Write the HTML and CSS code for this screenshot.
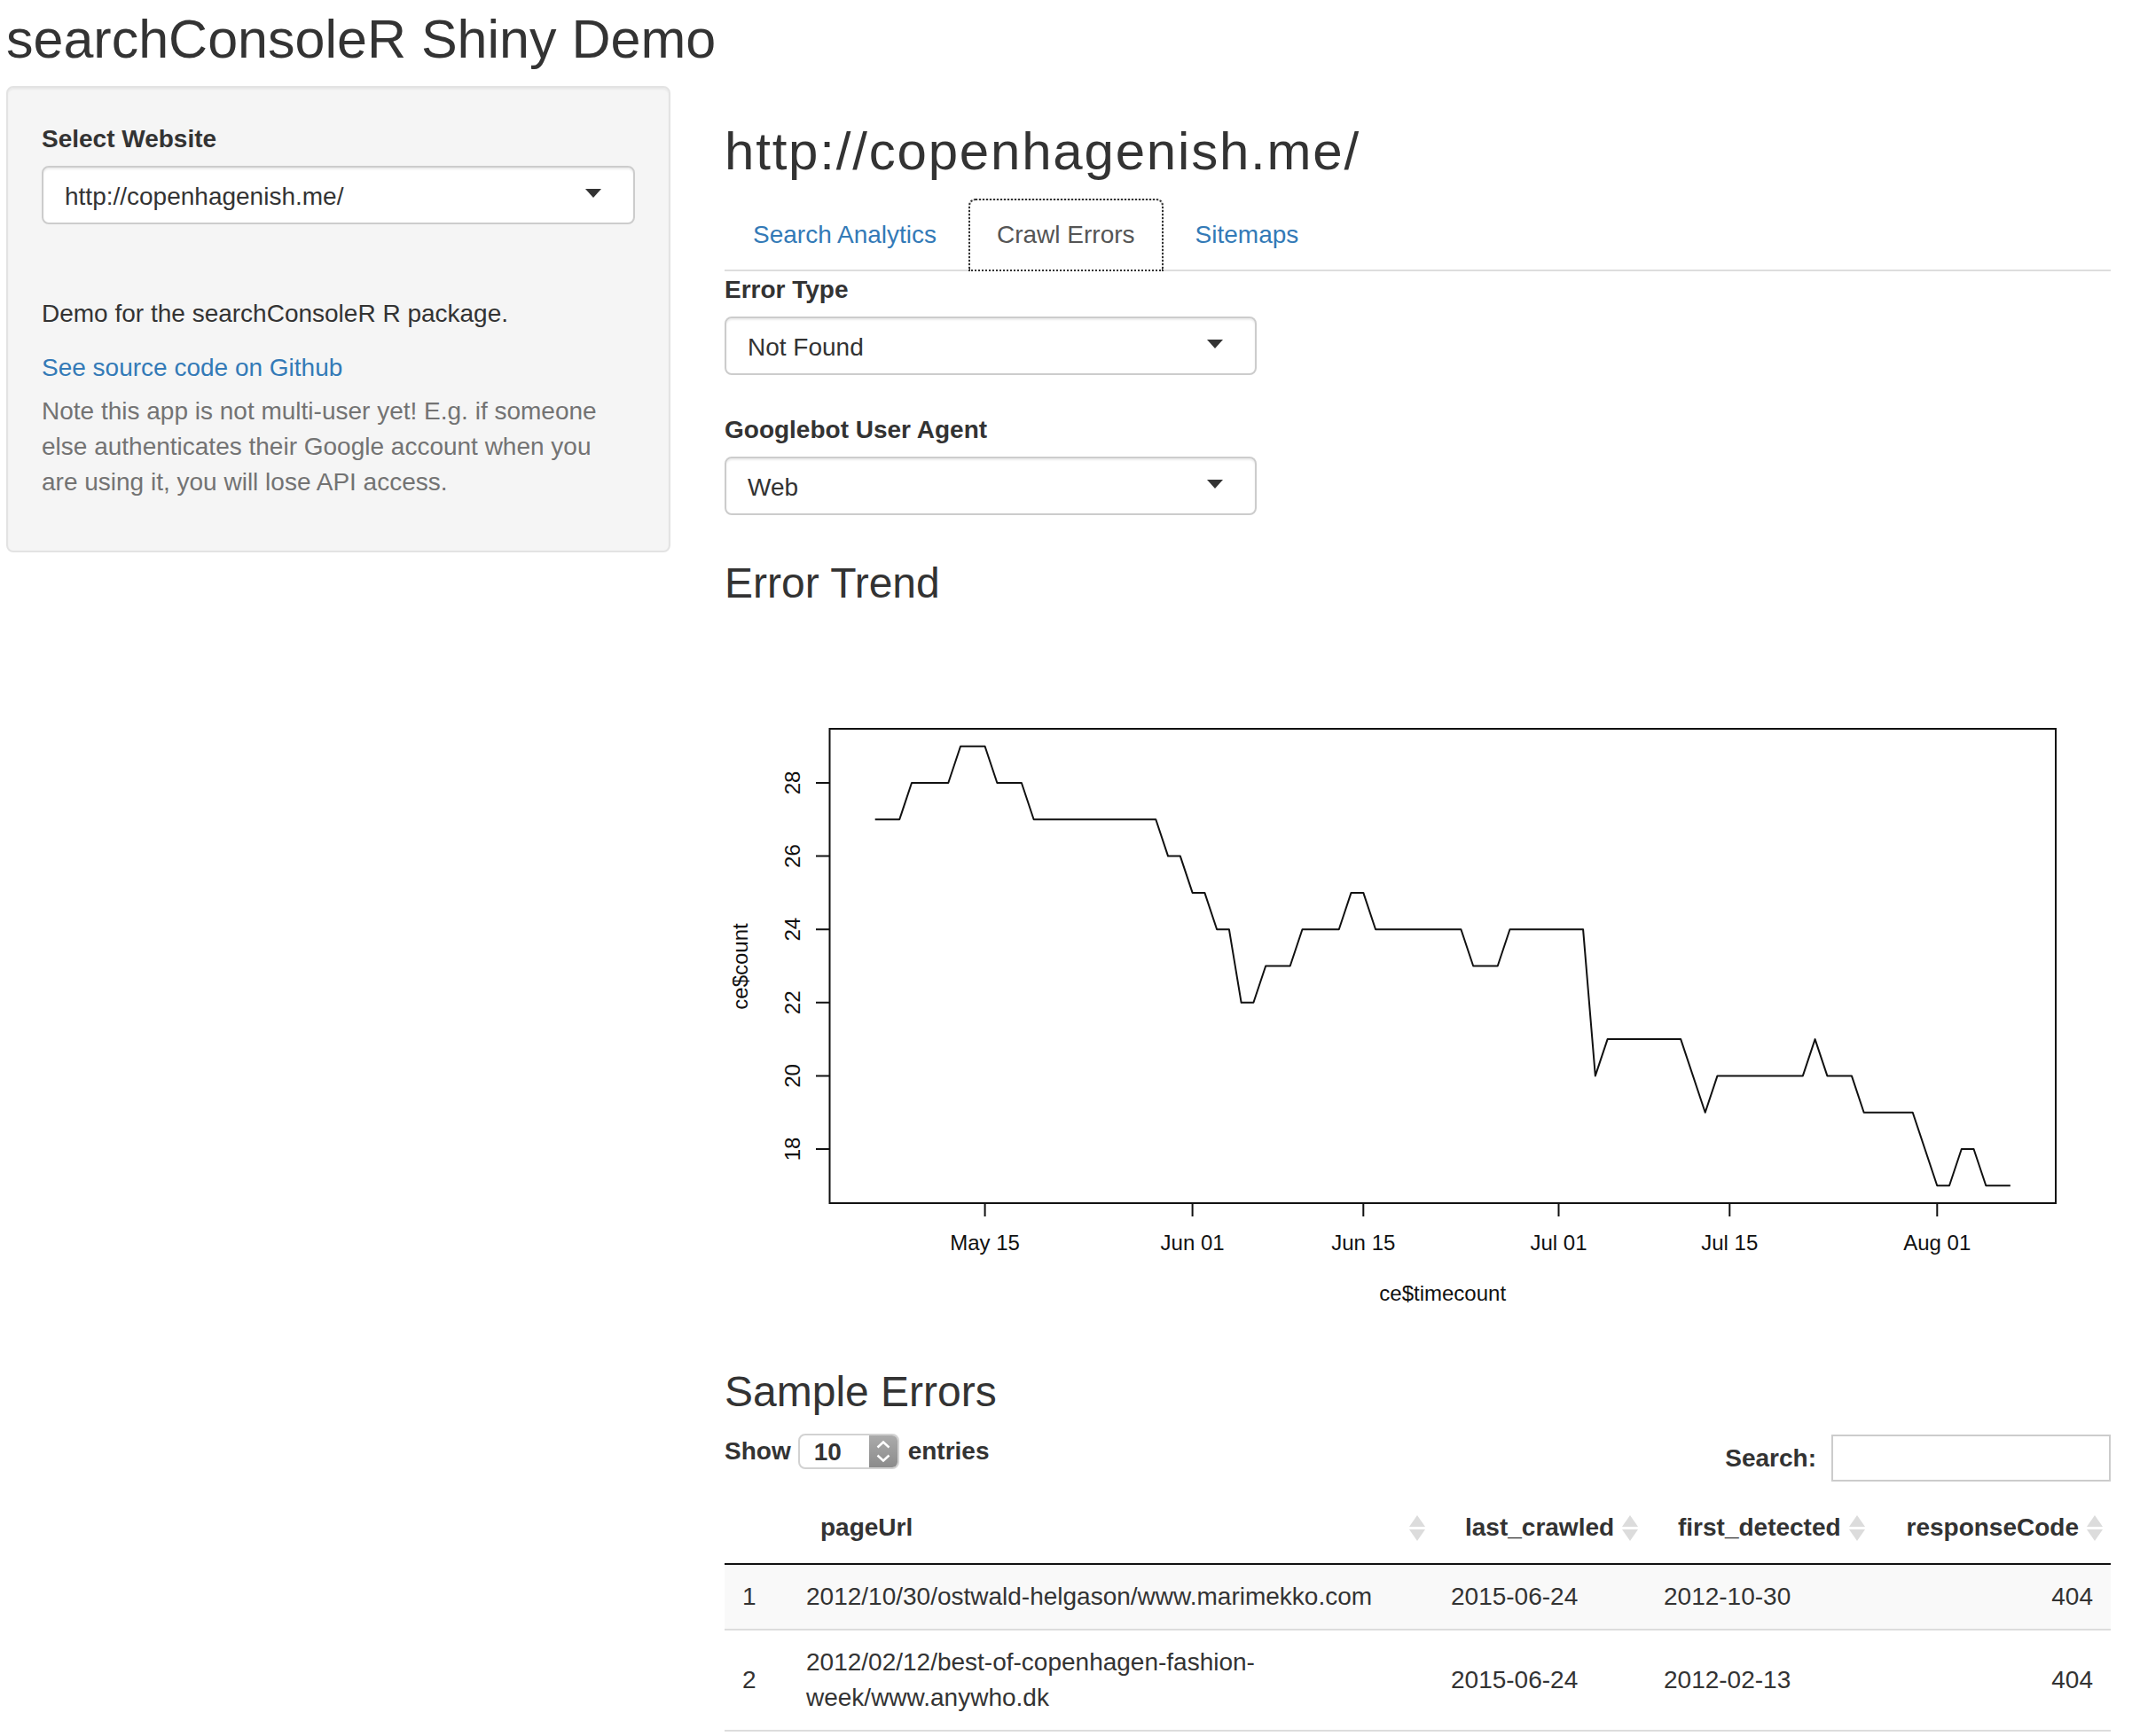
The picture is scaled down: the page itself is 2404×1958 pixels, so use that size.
FILE: index.html
```html
<!DOCTYPE html>
<html lang="en">
<head>
<meta charset="utf-8">
<title>searchConsoleR Shiny Demo</title>
<link rel="stylesheet" href="styles.css">
</head>
<body>
<div class="page">
  <h2 class="app-title">searchConsoleR Shiny Demo</h2>
  <div class="layout">
    <aside class="well">
      <label class="field-label">Select Website</label>
      <div class="select"><span>http://copenhagenish.me/</span><span class="caret"></span></div>
      <p class="demo">Demo for the searchConsoleR R package.</p>
      <p class="src"><a href="#">See source code on Github</a></p>
      <p class="note">Note this app is not multi-user yet! E.g. if someone else authenticates their Google account when you are using it, you will lose API access.</p>
    </aside>

    <main class="main">
      <h2 class="site-title">http://copenhagenish.me/</h2>
      <ul class="tabs">
        <li><a href="#">Search Analytics</a></li>
        <li class="active"><a href="#">Crawl Errors</a></li>
        <li><a href="#">Sitemaps</a></li>
      </ul>

      <div class="tab-pane">
        <div class="fields">
          <div class="group">
            <label class="field-label">Error Type</label>
            <div class="select narrow"><span>Not Found</span><span class="caret"></span></div>
          </div>
          <div class="group">
            <label class="field-label">Googlebot User Agent</label>
            <div class="select narrow"><span>Web</span><span class="caret"></span></div>
          </div>
        </div>

        <h3 class="section-title">Error Trend</h3>
        <svg class="plot" viewBox="817 704 1563 799" width="1563" height="799" xmlns="http://www.w3.org/2000/svg">
          <g fill="none" stroke="#111" stroke-width="2">
            <rect x="935.5" y="822" width="1382.5" height="535"/>
            <path d="M920 1296H935.5M920 1213.4H935.5M920 1130.8H935.5M920 1048.2H935.5M920 965.6H935.5M920 883H935.5"/>
            <path d="M1110.6 1357V1372M1344.6 1357V1372M1537.3 1357V1372M1757.5 1357V1372M1950.3 1357V1372M2184.3 1357V1372"/>
            <polyline vector-effect="non-scaling-stroke" stroke-linejoin="round" transform="translate(986.7 883) scale(13.765 -41.3) translate(0 -28)" points="0,27 2,27 3,28 6,28 7,29 9,29 10,28 12,28 13,27 23,27 24,26 25,26 26,25 27,25 28,24 29,24 30,22 31,22 32,23 34,23 35,24 38,24 39,25 40,25 41,24 48,24 49,23 51,23 52,24 58,24 59,20 60,21 66,21 68,19 69,20 76,20 77,21 78,20 80,20 81,19 85,19 87,17 88,17 89,18 90,18 91,17 93,17"/>
          </g>
          <g font-size="24" fill="#111" text-anchor="middle">
            <text transform="translate(902 1296) rotate(-90)">18</text>
            <text transform="translate(902 1213.4) rotate(-90)">20</text>
            <text transform="translate(902 1130.8) rotate(-90)">22</text>
            <text transform="translate(902 1048.2) rotate(-90)">24</text>
            <text transform="translate(902 965.6) rotate(-90)">26</text>
            <text transform="translate(902 883) rotate(-90)">28</text>
            <text x="1110.6" y="1410">May 15</text>
            <text x="1344.6" y="1410">Jun 01</text>
            <text x="1537.3" y="1410">Jun 15</text>
            <text x="1757.5" y="1410">Jul 01</text>
            <text x="1950.3" y="1410">Jul 15</text>
            <text x="2184.3" y="1410">Aug 01</text>
            <text transform="translate(843 1090) rotate(-90)">ce$count</text>
            <text x="1626.7" y="1467">ce$timecount</text>
          </g>
        </svg>

        <h3 class="section-title">Sample Errors</h3>
        <div class="dt-top">
          <label class="dt-length">Show
            <span class="len-select">
              <span class="len-val">10</span>
              <span class="len-spin">
                <svg width="18" height="26" viewBox="0 0 18 26" xmlns="http://www.w3.org/2000/svg"><path d="M2.5 8.5L9 2.5L15.5 8.5M2.5 17.5L9 23.5L15.5 17.5" fill="none" stroke="#fff" stroke-width="2.4"/></svg>
              </span>
            </span>
            entries</label>
          <label class="dt-filter">Search:<input type="search" class="search-input"></label>
        </div>

        <table class="dt">
          <colgroup>
            <col class="c-idx"><col class="c-url"><col class="c-crawl"><col class="c-first"><col class="c-code">
          </colgroup>
          <thead>
            <tr>
              <th></th>
              <th class="sortable">pageUrl</th>
              <th class="sortable">last_crawled</th>
              <th class="sortable">first_detected</th>
              <th class="sortable num">responseCode</th>
            </tr>
          </thead>
          <tbody>
            <tr class="odd">
              <td>1</td>
              <td>2012/10/30/ostwald-helgason/www.marimekko.com</td>
              <td>2015-06-24</td>
              <td>2012-10-30</td>
              <td class="num">404</td>
            </tr>
            <tr>
              <td>2</td>
              <td>2012/02/12/best-of-copenhagen-fashion-week/www.anywho.dk</td>
              <td>2015-06-24</td>
              <td>2012-02-13</td>
              <td class="num">404</td>
            </tr>
          </tbody>
        </table>
      </div>
    </main>
  </div>
</div>
</body>
</html>
```

FILE: styles.css
```css
* { box-sizing: border-box; }

html, body {
  margin: 0;
  padding: 0;
  background: #fff;
}

body {
  width: 2404px;
  font-family: "Liberation Sans", Arial, Helvetica, sans-serif;
  font-size: 28px;
  line-height: 40px;
  color: #333;
  overflow: hidden;
}

.page {
  padding: 0 24px 0 7px;
}

.app-title {
  font-size: 61px;
  line-height: 66px;
  font-weight: 400;
  margin: 11px 0 20px;
}

.layout {
  display: flex;
  align-items: flex-start;
  gap: 61px;
}

/* sidebar */
.well {
  flex: none;
  width: 749px;
  background: #f5f5f5;
  border: 2px solid #e3e3e3;
  border-radius: 8px;
  box-shadow: inset 0 2px 2px rgba(0, 0, 0, 0.05);
  padding: 38px;
}

.field-label {
  display: block;
  font-weight: 700;
  margin: 0 0 10px;
}

.select {
  display: flex;
  align-items: center;
  justify-content: space-between;
  height: 66px;
  padding: 4px 36px 0 24px;
  background: #fff;
  border: 2px solid #ccc;
  border-radius: 8px;
  box-shadow: inset 0 2px 2px rgba(0, 0, 0, 0.075);
  color: #333;
}

.select.narrow { width: 600px; }

.caret {
  width: 0;
  height: 0;
  border-style: solid;
  border-width: 10px 9px 0 9px;
  border-color: #333 transparent transparent transparent;
  margin-bottom: 8px;
}

.demo { margin: 81px 0 0; }

.src { margin: 21px 0 0; }

.src a {
  color: #337ab7;
  text-decoration: none;
}

.note {
  max-width: 650px;
  margin: 9px 0 19px;
  color: #737373;
}

/* main column */
.main {
  flex: 1;
  min-width: 0;
}

.site-title {
  font-size: 60px;
  line-height: 66px;
  font-weight: 400;
  letter-spacing: 1.8px;
  margin: 41px 0 20px;
}

.tabs {
  display: flex;
  list-style: none;
  margin: 0;
  padding: 0;
  border-bottom: 2px solid #ddd;
}

.tabs li { margin-bottom: -2px; }

.tabs a {
  display: block;
  padding: 19px 30px;
  margin-right: 4px;
  line-height: 40px;
  border: 2px solid transparent;
  border-radius: 8px 8px 0 0;
  color: #337ab7;
  text-decoration: none;
}

.tabs .active a {
  color: #555;
  background: #fff;
  border-color: #ddd #ddd transparent;
  outline: 2px dotted #333;
  outline-offset: -2px;
}

.tab-pane { padding-top: 1px; }

.fields { padding-bottom: 10px; }

.group + .group { margin-top: 42px; }

.section-title {
  font-size: 48px;
  line-height: 53px;
  font-weight: 400;
  margin: 40px 0 20px;
}

.plot {
  display: block;
  font-family: "Liberation Sans", Arial, sans-serif;
}

/* datatable controls */
.dt-top {
  display: flex;
  justify-content: space-between;
  align-items: flex-start;
}

.dt-length {
  display: flex;
  align-items: center;
  margin-top: 1px;
  font-weight: 700;
}

.len-select {
  display: flex;
  width: 114px;
  height: 40px;
  margin: 0 10px 0 8px;
  border: 2px solid #d2d2d2;
  border-radius: 8px;
  overflow: hidden;
  background: #fff;
}

.len-val {
  flex: 1;
  padding: 1px 0 0 16px;
  line-height: 36px;
}

.len-spin {
  flex: none;
  width: 32px;
  display: flex;
  align-items: center;
  justify-content: center;
  background: linear-gradient(#ababab, #8b8b8b);
}

.dt-filter {
  display: flex;
  align-items: center;
  margin: 2px 0 12px;
  font-weight: 700;
}

.search-input {
  width: 315px;
  height: 53px;
  margin: 0 0 0 17px;
  padding: 0 8px;
  border: 2px solid #ccc;
  border-radius: 0;
  background: #fff;
  font: inherit;
}

/* table */
.dt {
  width: 100%;
  table-layout: fixed;
  border-collapse: separate;
  border-spacing: 0;
}

.c-idx { width: 72px; }
.c-url { width: 727px; }
.c-crawl { width: 240px; }
.c-first { width: 256px; }
.c-code { width: 268px; }

.dt th {
  position: relative;
  padding: 20px 36px;
  text-align: left;
  font-weight: 700;
  border-bottom: 2px solid #111;
}

.dt th.num { text-align: right; }

.dt th.sortable::before,
.dt th.sortable::after {
  content: "";
  position: absolute;
  right: 9px;
  width: 0;
  height: 0;
  border-left: 9px solid transparent;
  border-right: 9px solid transparent;
}

.dt th.sortable::before {
  top: 26px;
  border-bottom: 13px solid #dcdcdc;
}

.dt th.sortable::after {
  top: 42px;
  border-top: 13px solid #dcdcdc;
}

.dt td {
  padding: 16px 20px;
  vertical-align: middle;
}

.dt td.num { text-align: right; }

.dt tr.odd td { background: #f9f9f9; }

.dt tbody tr + tr td { border-top: 2px solid #ddd; }

.dt tbody tr:last-child td { border-bottom: 2px solid #ddd; }
```
